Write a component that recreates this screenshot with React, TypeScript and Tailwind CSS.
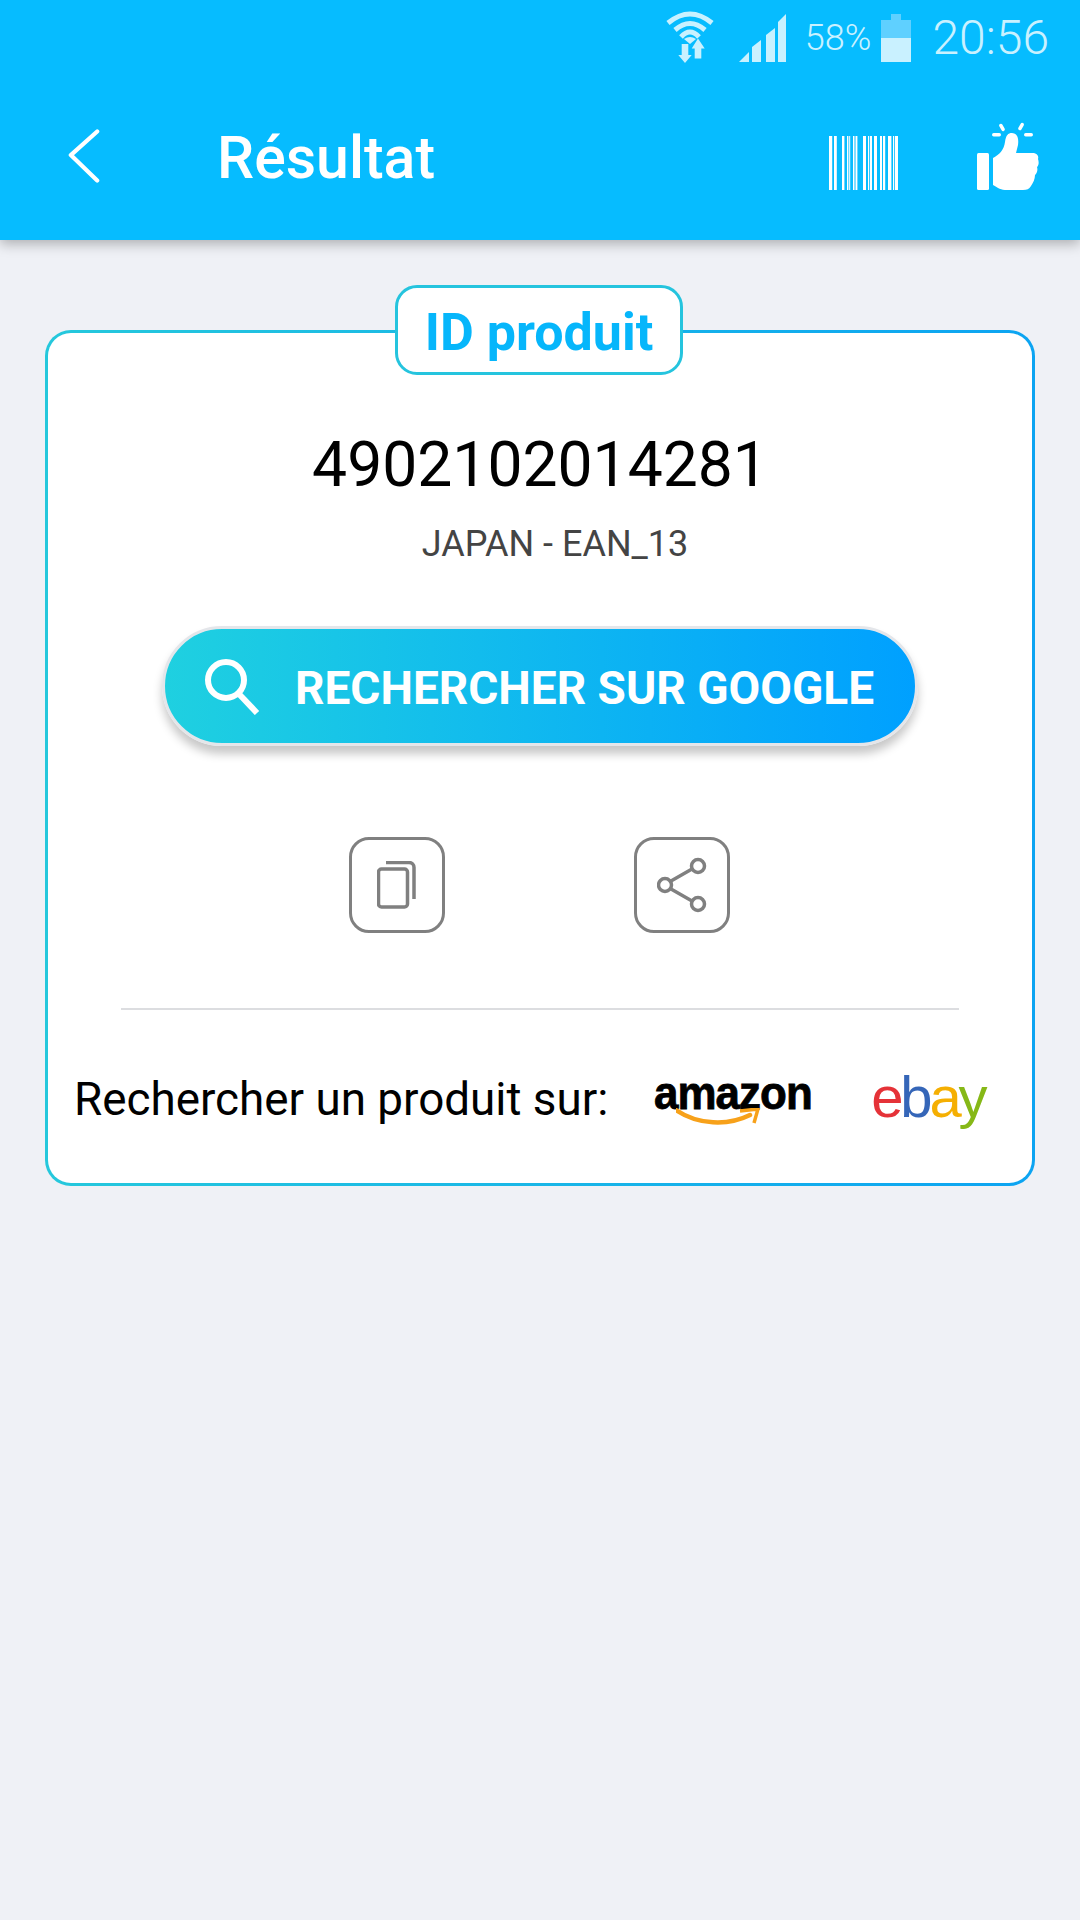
import React from 'react';

const FONT = "font-['Roboto',sans-serif]";
const BARS = [
  [0, 3.2], [5, 2.8], [13, 2.4], [18, 1.4], [20.2, 1], [24, 1], [25.5, 1], [27, 1.4], [34, 3], [39, 1.2], [41, 2],
  [45, 3], [51, 2], [54, 2.2], [59, 3.4], [64, 1.2], [66, 3],
];

const WifiIcon = () => (
  <svg width="52" height="54" viewBox="0 0 52 54" fill="none" className="text-[#c9f1ff]">
    <path d="M4 12Q26 -6 48 12" stroke="currentColor" strokeWidth="5" />
    <path d="M11 19Q26 6 41 19" stroke="currentColor" strokeWidth="5" />
    <path d="M17 26Q26 16 35 26" stroke="currentColor" strokeWidth="5" />
    <path d="M20 28Q26 24 32 28L26 33Z" fill="currentColor" />
    <path d="M17.7 33H24.3V44H27.7L21 52L14.3 44H17.7Z" fill="currentColor" />
    <path d="M34 27.5L40.7 37.5H37.3V47.5H30.7V37.5H27.7Z" fill="currentColor" />
  </svg>
);

const SignalIcon = () => (
  <svg width="48" height="49" viewBox="0 0 48 49" className="text-[#c9f1ff]">
    <path d="M0 48L10 38V48Z" fill="currentColor" />
    <path d="M13 33L22 26V48H13Z" fill="currentColor" />
    <path d="M27 21L36 14V48H27Z" fill="currentColor" />
    <path d="M39 8L47 0V48H39Z" fill="currentColor" />
  </svg>
);

const BatteryIcon = () => (
  <svg width="30" height="48" viewBox="0 0 30 48" className="text-[#c9f1ff]">
    <path d="M10 0H20V6H30V24H0V6H10Z" fill="#5fd0ff" />
    <rect y="24" width="30" height="24" fill="currentColor" />
  </svg>
);

const BarcodeIcon = () => (
  <svg width="70" height="54" viewBox="0 0 70 54" fill="#fff">
    {BARS.map(([x, w]) => (
      <rect key={x} x={x} y="0" width={w} height="54" />
    ))}
  </svg>
);

const ThumbIcon = () => (
  <svg width="63" height="70" viewBox="0 0 63 70" fill="#fff">
    <rect x="0" y="33" width="12" height="37" rx="1.5" />
    <path d="M16 65V38C22 35 27 30 28 22C29 15 31 13 35 13C40 13 42 18 41 25L39 33H55C60 33 62 36 61 39C62 42 62 45 60 47C61 50 60 53 58 55C58 59 56 63 54 66C52 69 50 70 46 70H30C24 70 21 68 16 65Z" />
    <rect x="15" y="13" width="9" height="3.5" rx="1.7" />
    <rect x="47" y="13" width="9" height="3.5" rx="1.7" />
    <rect x="0" y="-1.7" width="8" height="3.5" rx="1.7" transform="translate(23 4) rotate(60 0 0)" />
    <rect x="0" y="-1.7" width="8" height="3.5" rx="1.7" transform="translate(42 10) rotate(-60 0 0)" />
  </svg>
);

const CopyIcon = () => (
  <svg width="40" height="48" viewBox="0 0 40 48" fill="none" stroke="#808080" strokeWidth="3.5">
    <rect x="1.5" y="8" width="29" height="38" rx="3" />
    <path d="M9 1.5H32C35 1.5 37 3.5 37 6.5V38" />
  </svg>
);

const ShareIcon = () => (
  <svg width="50" height="56" viewBox="0 0 50 56" fill="none" stroke="#808080" strokeWidth="3.5">
    <circle cx="8" cy="28" r="6.5" />
    <circle cx="41" cy="9" r="6.5" />
    <circle cx="41" cy="47" r="6.5" />
    <path d="M14 24L35 12M14 32L35 44" />
  </svg>
);

const IconBox = ({ children }: { children: React.ReactNode }) => (
  <button className="flex h-[96px] w-[96px] items-center justify-center rounded-[20px] border-[3px] border-[#808080]">
    {children}
  </button>
);

const AmazonLogo = () => (
  <div className="relative h-[50px] w-[156px]">
    <span className="block origin-left scale-x-[0.955] font-['Liberation_Sans',sans-serif] text-[46px] leading-[36px] font-bold tracking-[-1px] text-black [-webkit-text-stroke:0.8px_black]">
      amazon
    </span>
    <svg width="84" height="20" viewBox="0 0 84 20" fill="none" className="absolute top-[33px] left-[22px]">
      <path d="M0 2C22 17 52 18 74 7" stroke="#f7a11a" strokeWidth="4.5" strokeLinecap="round" />
      <path d="M64 3L82 1L78 15" stroke="#f7a11a" strokeWidth="3.5" fill="none" />
    </svg>
  </div>
);

const EbayLogo = () => (
  <div className="-mt-[6px] h-[48px] font-['Liberation_Sans',sans-serif] text-[58px] leading-[48px] tracking-[-3.2px]">
    <span className="text-[#e53238]">e</span>
    <span className="text-[#3566b8]">b</span>
    <span className="text-[#f5af02]">a</span>
    <span className="text-[#86b817]">y</span>
  </div>
);

export default function App() {
  return (
    <div className={`${FONT} min-h-[1920px] w-[1080px] bg-[#eff1f6]`}>
      <header className="relative bg-[#06bcff] shadow-[0_4px_12px_rgba(0,0,0,0.28)]">
        <div className="flex h-[75px] items-center justify-end pt-[1px]">
          <WifiIcon />
          <div className="ml-[23px]"><SignalIcon /></div>
          <span className="ml-[18px] text-[36px] font-light text-[#c9f1ff]">58%</span>
          <div className="ml-[10px]"><BatteryIcon /></div>
          <span className="mr-[31px] ml-[21px] text-[48px] font-light text-[#c9f1ff]">20:56</span>
        </div>
        <div className="flex h-[165px] items-start">
          <svg width="32" height="56" viewBox="0 0 34 58" fill="none" className="mt-[53px] ml-[68px]">
            <path d="M31 3L3 28L31 55" stroke="#fff" strokeWidth="4.5" strokeLinecap="round" strokeLinejoin="round" />
          </svg>
          <h1 className="mt-[47px] ml-[117px] text-[59px] leading-[72px] font-medium text-white">Résultat</h1>
          <div className="mt-[61px] ml-auto"><BarcodeIcon /></div>
          <div className="mt-[45px] mr-[40px] ml-[78px]"><ThumbIcon /></div>
        </div>
      </header>

      <main className="relative mx-[45px] mt-[90px] h-[856px] rounded-[26px] border-[3px] border-transparent bg-[linear-gradient(#fff,#fff),linear-gradient(90deg,#25c8dc,#0ca4f2)] [background-clip:padding-box,border-box] [background-origin:border-box]">
        <div className="absolute top-[-48px] left-[347px] flex h-[90px] w-[288px] items-center justify-center rounded-[22px] border-[3px] border-[#25c4de] bg-white pt-[6px] text-[52px] font-bold text-[#06b6fb]">
          ID produit
        </div>

        <div className="pt-[96px] text-center text-[62.4px] leading-[72px] text-black">4902102014281</div>
        <div className="mt-[23px] pl-[30px] text-center text-[36px] leading-[40px] text-[#444]">JAPAN - EAN_13</div>

        <button className="mx-auto mt-[62px] flex h-[120px] w-[756px] items-center rounded-full border-[3px] border-[#e4e6ea] bg-[linear-gradient(90deg,#1fd0e0,#00a0ff)] pl-[38px] shadow-[0_8px_10px_rgba(0,0,0,0.22)]">
          <svg width="58" height="58" viewBox="0 0 58 58" fill="none" stroke="#fff">
            <circle cx="23" cy="23" r="18" strokeWidth="6" />
            <path d="M36 37L54 56" strokeWidth="6" />
          </svg>
          <span className="mt-[4px] ml-[34px] text-[46px] font-bold text-white">RECHERCHER SUR GOOGLE</span>
        </button>

        <div className="mt-[91px] flex justify-center gap-[189px] pr-[2px]">
          <IconBox><CopyIcon /></IconBox>
          <IconBox><ShareIcon /></IconBox>
        </div>

        <div className="mx-[73px] mt-[75px] h-[2px] bg-[#dcdde0]" />

        <div className="flex items-center pt-[60px] pl-[26px]">
          <span className="text-[45.8px] leading-[60px] text-black">Rechercher un produit sur:</span>
          <div className="ml-[46px]"><AmazonLogo /></div>
          <div className="ml-[61px]"><EbayLogo /></div>
        </div>
      </main>
    </div>
  );
}
